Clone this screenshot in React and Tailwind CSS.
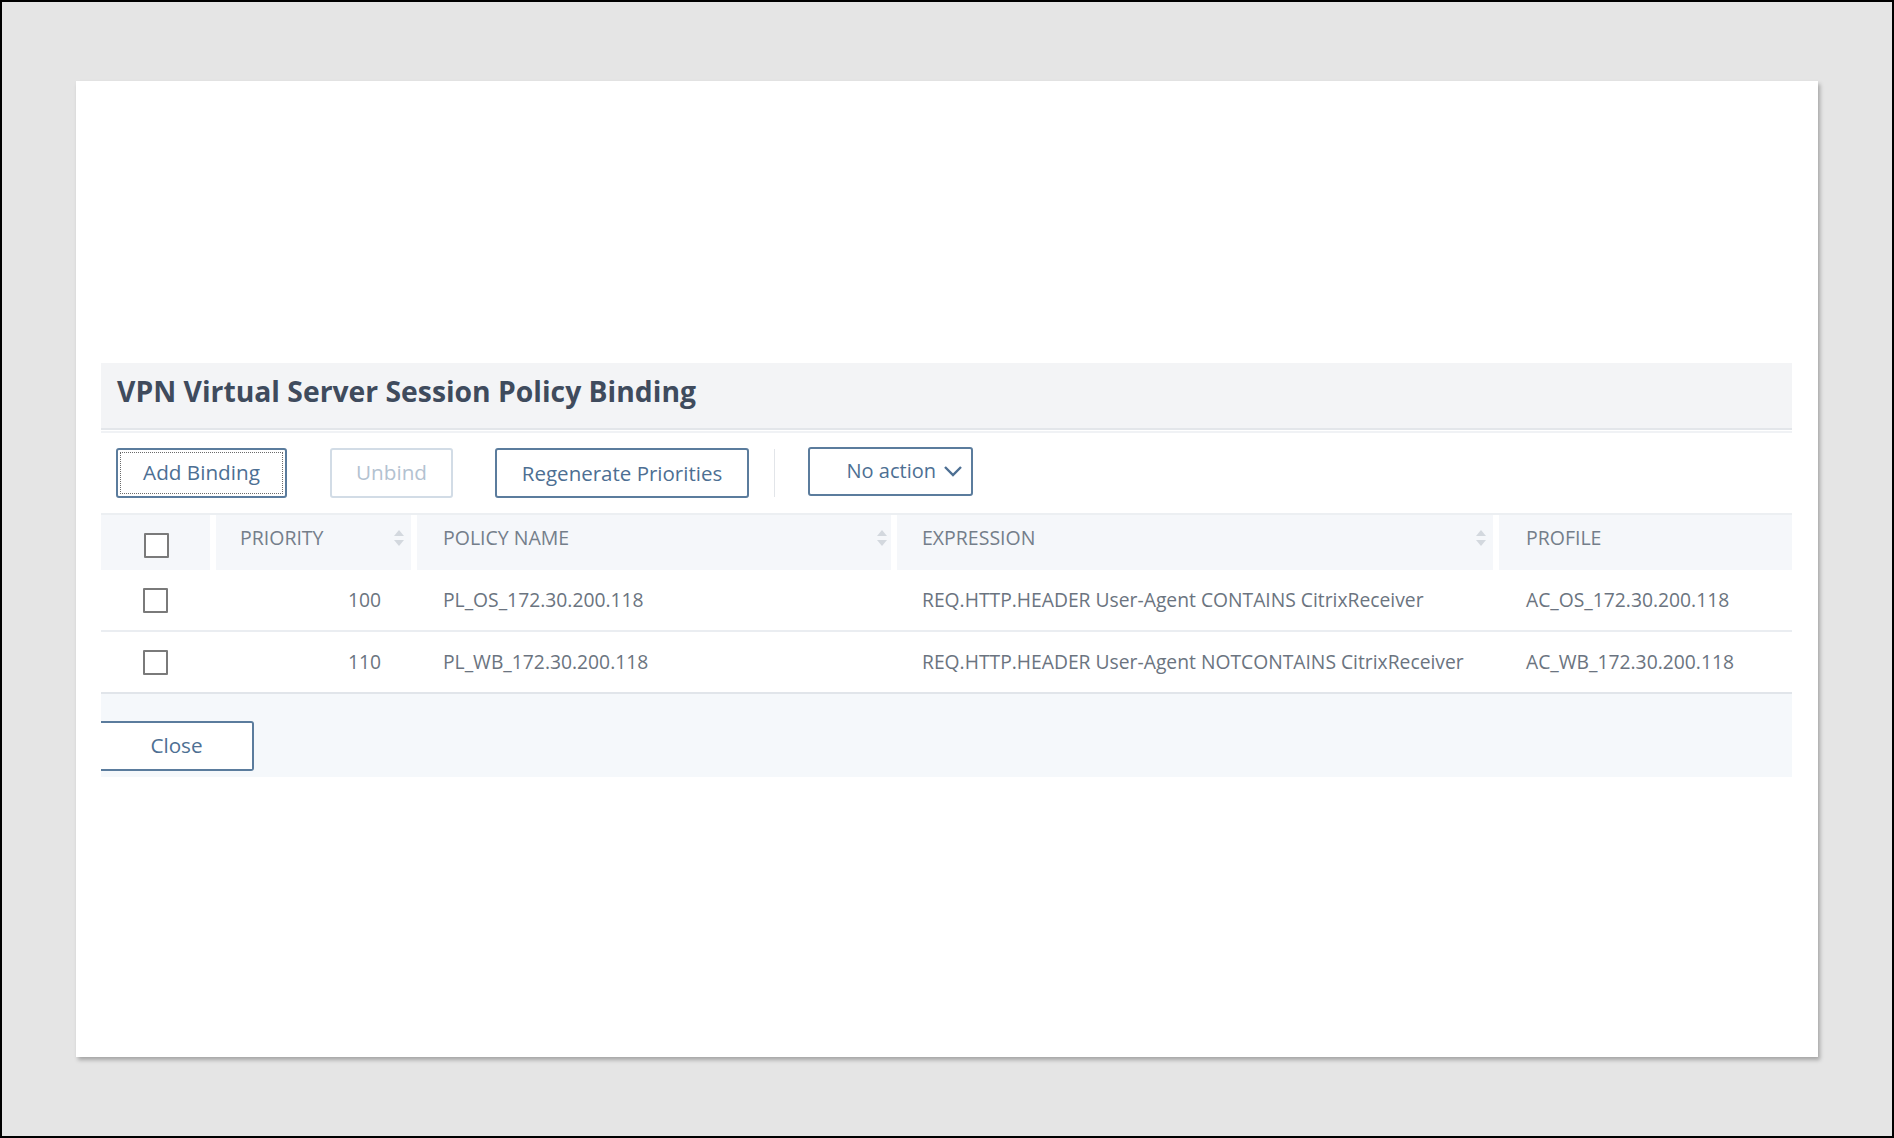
import React from "react";

const font = { fontFamily: '"Open Sans", "Noto Sans", sans-serif' };

function Checkbox() {
  return <div className="w-[25px] h-[25px] border-2 border-[#7a7a7a] rounded-[1px] bg-white" />;
}

function SortIcon() {
  return (
    <svg width="12" height="18" viewBox="0 0 12 18" className="shrink-0">
      <path d="M6 1 L11 7 L1 7 Z" fill="#d3d8de" />
      <path d="M6 17 L11 11 L1 11 Z" fill="#d3d8de" />
    </svg>
  );
}

const rows = [
  {
    pr: "100",
    name: "PL_OS_172.30.200.118",
    expr: "REQ.HTTP.HEADER User-Agent CONTAINS CitrixReceiver",
    prof: "AC_OS_172.30.200.118",
  },
  {
    pr: "110",
    name: "PL_WB_172.30.200.118",
    expr: "REQ.HTTP.HEADER User-Agent NOTCONTAINS CitrixReceiver",
    prof: "AC_WB_172.30.200.118",
  },
];

const cols = "grid grid-cols-[109px_195px_474px_596px_1fr] gap-x-[6px]";

export default function App() {
  return (
    <div
      className="w-[1894px] h-[1138px] bg-[#e5e5e5] border-2 border-black overflow-hidden"
      style={font}
    >
      <div className="ml-[74px] mt-[79px] w-[1742px] h-[976px] bg-white shadow-[2px_3px_4px_rgba(0,0,0,0.28)] pt-[282px] pl-[25px]">
        <div className="w-[1691px]">
          {/* Header */}
          <div className="h-[67px] bg-[#f3f4f6] flex items-center pl-[16px] pb-[8px] border-b-2 border-[#e3e6ea]">
            <h1 className="text-[28.3px] leading-none font-bold text-[#3f4b5d]">
              VPN Virtual Server Session Policy Binding
            </h1>
          </div>
          <div className="h-[2px] mt-[1px] bg-[#f0f2f5]" />

          {/* Toolbar */}
          <div className="flex items-center pl-[15px] pt-[14px] h-[66px]">
            <button className="h-[50px] w-[171px] border-2 border-[#5b7c9d] rounded-[3px] p-[2px] bg-white">
              <div className="h-full w-full border border-dotted border-[#6b6b6b] flex items-center justify-center text-[20.7px] text-[#4d6f93]">
                Add Binding
              </div>
            </button>
            <button className="ml-[43px] h-[50px] w-[123px] border-2 border-[#d2dce6] rounded-[3px] bg-white flex items-center justify-center text-[20.7px] text-[#b3c2d1]">
              Unbind
            </button>
            <button className="ml-[42px] h-[50px] w-[254px] border-2 border-[#5b7c9d] rounded-[3px] bg-white flex items-center justify-center text-[20.5px] text-[#4d6f93]">
              Regenerate Priorities
            </button>
            <div className="ml-[25px] w-[1px] h-[48px] bg-[#e2e5e9]" />
            <button className="ml-[33px] -mt-[4px] h-[49px] w-[165px] border-2 border-[#5b7c9d] rounded-[3px] bg-white flex items-center justify-end pr-[8px] text-[20px] text-[#4d6f93]">
              <span className="mr-[7px]">No action</span>
              <svg width="20" height="12" viewBox="0 0 20 12">
                <path d="M2 2 L10 10 L18 2" fill="none" stroke="#4d6f93" strokeWidth="2.4" />
              </svg>
            </button>
          </div>

          {/* Table */}
          <div className="mt-[14px] border-t-2 border-[#eceff2]">
            <div className={`${cols} h-[55px]`}>
              <div className="bg-[#f5f7fa] flex items-center pl-[43px] pt-[6px]">
                <Checkbox />
              </div>
              <div className="bg-[#f5f7fa] flex items-center justify-between pl-[24px] pr-[6px] pb-[10px] text-[19.5px] text-[#747e8a]">
                <span>PRIORITY</span>
                <SortIcon />
              </div>
              <div className="bg-[#f5f7fa] flex items-center justify-between pl-[26px] pr-[3px] pb-[10px] text-[19.5px] text-[#747e8a]">
                <span>POLICY NAME</span>
                <SortIcon />
              </div>
              <div className="bg-[#f5f7fa] flex items-center justify-between pl-[25px] pr-[6px] pb-[10px] text-[19.5px] text-[#747e8a]">
                <span>EXPRESSION</span>
                <SortIcon />
              </div>
              <div className="bg-[#f5f7fa] flex items-center pl-[27px] pb-[10px] text-[19.5px] text-[#747e8a]">
                <span>PROFILE</span>
              </div>
            </div>
            {rows.map((r, i) => (
              <div
                key={i}
                className={`${cols} h-[62px] border-b-2 ${i === rows.length - 1 ? "border-[#e1e5ea]" : "border-[#eaedf1]"} text-[19.3px] text-[#6b7480]`}
              >
                <div className="flex items-center pl-[42px]">
                  <Checkbox />
                </div>
                <div className="flex items-center justify-end pr-[30px]">{r.pr}</div>
                <div className="flex items-center pl-[26px]">{r.name}</div>
                <div className="flex items-center pl-[25px]">{r.expr}</div>
                <div className="flex items-center pl-[27px]">{r.prof}</div>
              </div>
            ))}
          </div>

          {/* Footer */}
          <div className="h-[83px] bg-[#f5f8fb] pt-[27px]">
            <button className="h-[50px] w-[153px] border-2 border-l-0 border-[#5b7c9d] rounded-r-[3px] bg-white flex items-center justify-center text-[20.7px] text-[#4d6f93]">
              Close
            </button>
          </div>
        </div>
      </div>
    </div>
  );
}
